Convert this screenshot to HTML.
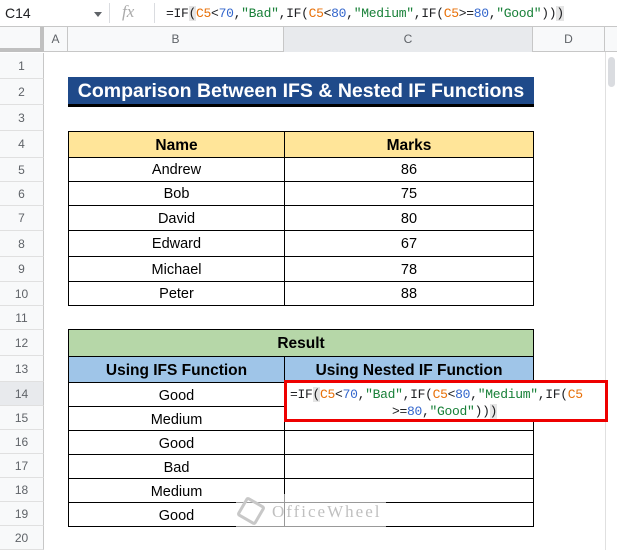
<!DOCTYPE html>
<html><head><meta charset="utf-8"><style>
*{margin:0;padding:0;box-sizing:border-box}
body{width:617px;height:550px;overflow:hidden;background:#fff;font-family:"Liberation Sans",Arial,sans-serif;position:relative}
.a{position:absolute}
.mono{font-family:"Liberation Mono",monospace}
.rh{position:absolute;left:0;width:44px;background:#f8f9fa;border-bottom:1px solid #e0e0e0;border-right:1px solid #c7c7c7;color:#5f6368;font-size:12px;text-align:center}
.c{position:absolute;text-align:center;font-size:14.5px;color:#000;border:1px solid #000;padding-top:2px}
.o{color:#e8710a}.b{color:#3366cc}.g{color:#188038}
</style></head><body>
<div class="a" style="left:0;top:0;width:617px;height:27px;border-bottom:1px solid #c7c7c7;background:#fff"></div>
<div class="a" style="left:5px;top:5px;font-size:14px;color:#202124">C14</div>
<div class="a" style="left:94px;top:12px;width:0;height:0;border-left:4px solid transparent;border-right:4px solid transparent;border-top:5px solid #5f6368"></div>
<div class="a" style="left:109px;top:3px;width:1px;height:20px;background:#dadce0"></div>
<div class="a" style="left:122px;top:2px;font-family:'Liberation Serif',serif;font-style:italic;font-size:17px;color:#aaa">fx</div>
<div class="a" style="left:154px;top:3px;width:1px;height:20px;background:#dadce0"></div>
<div class="a mono" style="left:166px;top:6px;font-size:13px;letter-spacing:-0.3px;color:#202124;white-space:pre">=IF<span style="background:#e5e5e5">(</span><span class="o">C5</span>&lt;<span class="b">70</span>,<span class="g">"Bad"</span>,IF(<span class="o">C5</span>&lt;<span class="b">80</span>,<span class="g">"Medium"</span>,IF(<span class="o">C5</span>&gt;=<span class="b">80</span>,<span class="g">"Good"</span>))<span style="background:#e5e5e5">)</span></div>
<div class="a" style="left:0;top:27px;width:617px;height:25px;background:#f8f9fa;border-bottom:1px solid #c7c7c7"></div>
<div class="a" style="left:0;top:27px;width:44px;height:25px;border-right:4px solid #c0c0c0;border-bottom:4px solid #c0c0c0;background:#f8f9fa"></div>
<div class="a" style="left:44px;top:27px;width:24px;height:25px;border-right:1px solid #c7c7c7;text-align:center;font-size:12px;color:#5f6368;line-height:25px">A</div>
<div class="a" style="left:68px;top:27px;width:216px;height:25px;border-right:1px solid #c7c7c7;text-align:center;font-size:12px;color:#5f6368;line-height:25px">B</div>
<div class="a" style="left:284px;top:27px;width:249px;height:25px;border-right:1px solid #c7c7c7;background:#e8eaed;text-align:center;font-size:12px;color:#5f6368;line-height:25px">C</div>
<div class="a" style="left:533px;top:27px;width:72px;height:25px;border-right:1px solid #c7c7c7;text-align:center;font-size:12px;color:#5f6368;line-height:25px">D</div>
<div class="a" style="left:605px;top:52px;width:12px;height:498px;border-left:1px solid #e0e0e0;background:#fff"></div>
<div class="a" style="left:608px;top:57px;width:7px;height:30px;border-radius:4px;background:#dadce0"></div>
<div id="rows"></div>
<script>
var b=[53,79,105,131,158,182,206,231,257,282,306,330,356,382,406,430,454,478,502,526,550];
var h='';for(var i=0;i<20;i++){var t=b[i],hh=b[i+1]-b[i];h+='<div class="rh" style="top:'+t+'px;height:'+hh+'px;line-height:'+hh+'px;'+(i==13?'background:#e8eaed;':'')+'">'+(i+1)+'</div>';}
document.getElementById('rows').innerHTML=h;
</script>
<div class="a" style="left:68px;top:77px;width:466px;height:30px;background:#1f4a8a;border-bottom:3px solid #000;color:#fff;font-weight:bold;font-size:19.5px;text-align:center;line-height:28px">Comparison Between IFS &amp; Nested IF Functions</div>
<div class="c" style="left:68px;top:131px;width:217px;height:27px;background:#ffe599;font-weight:bold;line-height:23px;font-size:15.5px">Name</div>
<div class="c" style="left:284px;top:131px;width:250px;height:27px;background:#ffe599;font-weight:bold;line-height:23px;font-size:15.5px">Marks</div>
<script>
var r=[[157,182,'Andrew','86'],[181,206,'Bob','75'],[205,231,'David','80'],[230,257,'Edward','67'],[256,282,'Michael','78'],[281,306,'Peter','88']];
var s='';r.forEach(function(x){var hh=x[1]-x[0];s+='<div class="c" style="left:68px;top:'+x[0]+'px;width:217px;height:'+hh+'px;line-height:'+(hh-4)+'px">'+x[2]+'</div><div class="c" style="left:284px;top:'+x[0]+'px;width:250px;height:'+hh+'px;line-height:'+(hh-4)+'px">'+x[3]+'</div>';});
document.write(s);
</script>
<div class="c" style="left:68px;top:329px;width:466px;height:28px;background:#b6d7a8;font-weight:bold;line-height:24px;font-size:15.5px">Result</div>
<div class="c" style="left:68px;top:356px;width:217px;height:27px;background:#9fc5e8;font-weight:bold;line-height:23px;font-size:15.5px">Using IFS Function</div>
<div class="c" style="left:284px;top:356px;width:250px;height:27px;background:#9fc5e8;font-weight:bold;line-height:23px;font-size:15.5px">Using Nested IF Function</div>
<script>
var v=['Good','Medium','Good','Bad','Medium','Good'];var s2='';
v.forEach(function(x,i){var t=382+i*24;s2+='<div class="c" style="left:68px;top:'+t+'px;width:217px;height:25px;line-height:23px">'+x+'</div><div class="c" style="left:284px;top:'+t+'px;width:250px;height:25px"></div>';});
document.write(s2);
</script>
<div class="a" style="left:236px;top:494px;width:150px;height:34px;background:rgba(255,255,255,0.6)"></div>
<div class="a" style="left:240px;top:500px;width:22px;height:22px;border:3px solid #c8c8c8;transform:rotate(30deg);border-radius:3px"></div>
<div class="a" style="left:272px;top:502px;font-family:'Liberation Serif',serif;font-size:17px;letter-spacing:2px;color:#c0c0c0">OfficeWheel</div>
<div class="a" style="left:284px;top:380px;width:324px;height:42px;border:3px solid #e00;background:#fff"></div>
<div class="a mono" style="left:290px;top:386px;font-size:13px;letter-spacing:-0.3px;color:#202124;white-space:pre;line-height:17px">=IF<span style="background:#e5e5e5">(</span><span class="o">C5</span>&lt;<span class="b">70</span>,<span class="g">"Bad"</span>,IF(<span class="o">C5</span>&lt;<span class="b">80</span>,<span class="g">"Medium"</span>,IF(<span class="o">C5</span></div>
<div class="a mono" style="left:392px;top:403px;font-size:13px;letter-spacing:-0.3px;color:#202124;white-space:pre;line-height:17px">&gt;=<span class="b">80</span>,<span class="g">"Good"</span>))<span style="background:#e5e5e5">)</span></div>
</body></html>
